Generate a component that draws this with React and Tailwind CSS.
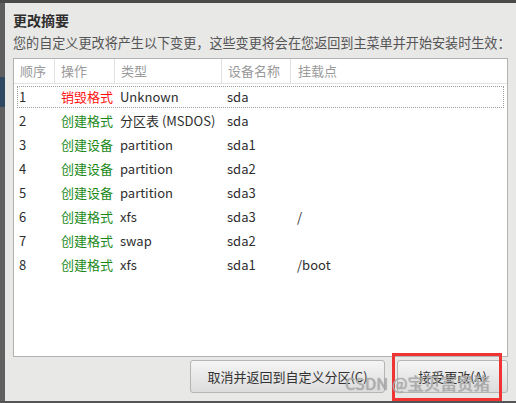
const rows = [
  { n: '1', op: '销毁格式', destroy: true, type: 'Unknown', dev: 'sda', mount: '' },
  { n: '2', op: '创建格式', type: '分区表 (MSDOS)', dev: 'sda', mount: '' },
  { n: '3', op: '创建设备', type: 'partition', dev: 'sda1', mount: '' },
  { n: '4', op: '创建设备', type: 'partition', dev: 'sda2', mount: '' },
  { n: '5', op: '创建设备', type: 'partition', dev: 'sda3', mount: '' },
  { n: '6', op: '创建格式', type: 'xfs', dev: 'sda3', mount: '/' },
  { n: '7', op: '创建格式', type: 'swap', dev: 'sda2', mount: '' },
  { n: '8', op: '创建格式', type: 'xfs', dev: 'sda1', mount: '/boot' },
]

const font = { fontFamily: '"Noto Sans CJK SC", "Noto Sans", sans-serif' }

function Header() {
  const cols = [
    ['顺序', 'w-[41px]'],
    ['操作', 'w-[60px]'],
    ['类型', 'w-[107px]'],
    ['设备名称', 'w-[69px]'],
  ]
  return (
    <div className="flex h-[25px] border-b border-[#e2e2e2] text-[13px] text-[#9a9a9a]">
      {cols.map(([label, w]) => (
        <div key={label} className={`${w} flex shrink-0 items-center border-r border-[#e2e2e2] pl-[6px]`}>
          {label}
        </div>
      ))}
      <div className="flex flex-1 items-center pl-[7px]">挂载点</div>
    </div>
  )
}

function Row({ row, focused }) {
  return (
    <div
      className={`mx-[2px] flex h-[24px] items-center text-[13px] text-[#2e2e2e] ${
        focused ? 'outline-1 outline-dotted outline-[#9c9c9c] -outline-offset-2' : ''
      }`}
    >
      <div className="w-[41px] shrink-0 pl-[3px]">{row.n}</div>
      <div className={`w-[60px] shrink-0 pl-[4px] ${row.destroy ? 'text-[#ff1010]' : 'text-[#1b8a1b]'}`}>{row.op}</div>
      <div className="w-[107px] shrink-0 pl-[3px]">{row.type}</div>
      <div className="w-[69px] shrink-0 pl-[3px]">{row.dev}</div>
      <div className="flex-1 pl-[4px]">{row.mount}</div>
    </div>
  )
}

export default function App() {
  return (
    <div className="relative flex h-[403px] w-[516px] flex-col overflow-hidden bg-[#5c5c5c]" style={font}>
      <div className="h-[3px] shrink-0 bg-[#4a4a4a]" />
      <div className="flex min-h-0 flex-1">
        {/* window edge behind the dialog */}
        <div className="flex w-[5px] shrink-0 flex-col">
          <div className="h-[74px] bg-[#5e5e5e]" />
          <div className="h-[30px] bg-[#2f4862]" />
          <div className="flex-1 bg-[#606060]" />
        </div>

        <div className="flex min-w-0 flex-1 flex-col bg-[#e8e8e7] pl-[8px]">
          <h1 className="pt-[7px] text-[14px] leading-[20px] font-bold text-[#2e2e2e]">更改摘要</h1>
          <p className="mt-[3px] text-[13.1px] leading-[20px] whitespace-nowrap text-[#555]">
            您的自定义更改将产生以下变更，这些变更将会在您返回到主菜单并开始安装时生效：
          </p>

          <div className="mt-[5px] h-[299px] w-[495px] shrink-0 border border-[#b2b2b2] bg-white">
            <Header />
            <div className="pt-[1px]">
              {rows.map((r, i) => (
                <Row key={r.n} row={r} focused={i === 0} />
              ))}
            </div>
          </div>

          <div className="flex h-[44px] items-start justify-end gap-[12px] pt-[3px] pr-[8px]">
            <button className="h-[33px] w-[195px] rounded-[3px] border border-[#b5b5b5] bg-gradient-to-b from-[#f5f5f5] to-[#dcdcdc] text-[13px] text-[#333]">
              取消并返回到自定义分区(C)
            </button>
            <button className="h-[33px] w-[111px] rounded-[3px] border border-[#b5b5b5] bg-gradient-to-b from-[#f5f5f5] to-[#dcdcdc] text-[13px] text-[#333]">
              接受更改(A)
            </button>
          </div>
        </div>
      </div>
      <div className="h-[2px] shrink-0 bg-[#555]" />

      {/* highlight box drawn over the accept button */}
      <div className="pointer-events-none absolute top-[353px] left-[392px] h-[48px] w-[110px] border-[3px] border-[#f03434]" />
      <div className="pointer-events-none absolute top-[373px] left-[345px] text-[16.5px] leading-[20px] whitespace-nowrap text-[#b4b4b4]/80 [text-shadow:0_0_1px_#888]">
        CSDN @宝贝富贵猪
      </div>
    </div>
  )
}
